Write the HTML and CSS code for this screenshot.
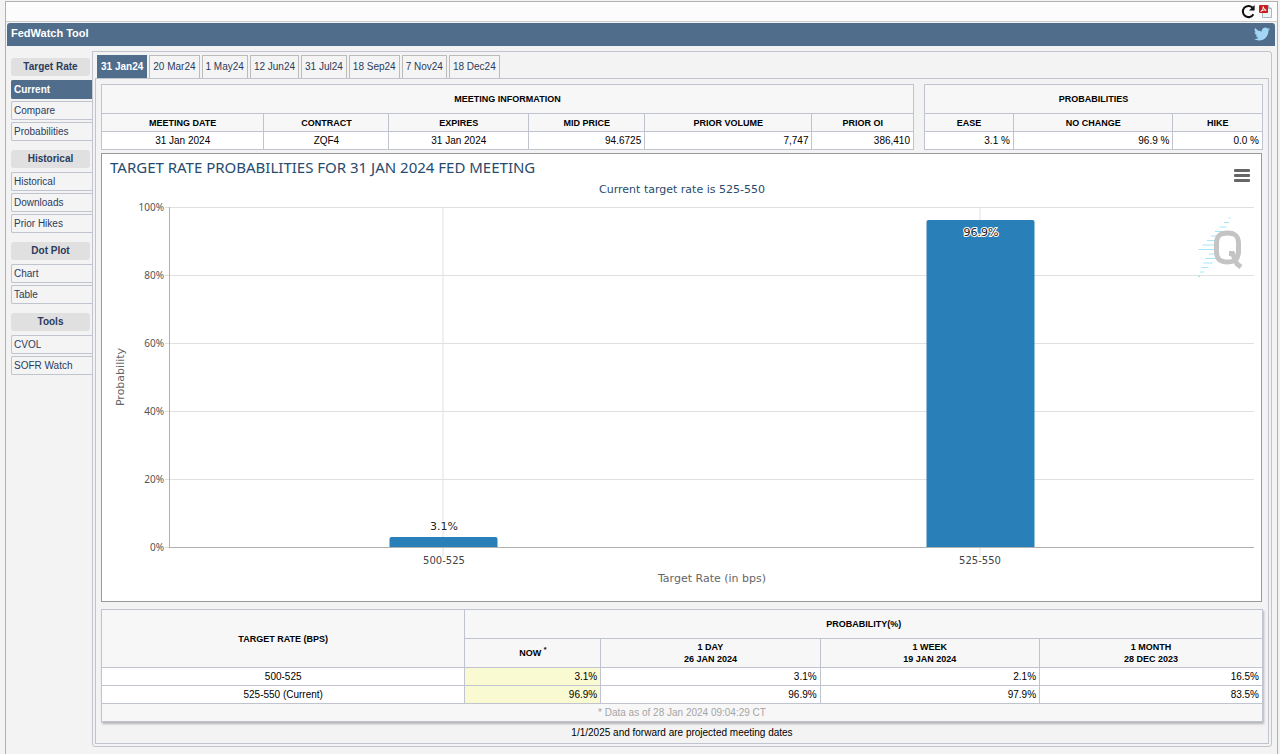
FILE: index.html
```html
<!DOCTYPE html>
<html lang="en">
<head>
<meta charset="utf-8">
<title>FedWatch Tool</title>
<link rel="stylesheet" href="styles.css">
</head>
<body>
<div class="frame">
  <div class="toolbar">
    <button class="icon-button" type="button" aria-label="Refresh">
      <svg width="15" height="15" viewBox="0 0 15 15"><path d="M12.400 10.200A5.600 5.600 0 1 1 11.400 3.500" fill="none" stroke="#111" stroke-width="2"/><path d="M13.600 1v5.600H8z" fill="#111"/></svg>
    </button>
    <button class="icon-button" type="button" aria-label="Export PDF">
      <svg width="15" height="15" viewBox="0 0 15 15"><path d="M4.500 1.500h6l3 3v9h-9z" fill="#eef3f6" stroke="#a9b8c2"/><path d="M10.500 1v3.500h3" fill="#cfdbe3" stroke="#a9b8c2"/><rect x="1" y="1" width="9" height="8" rx="1" fill="#c81e1e"/><path d="M2.800 7.300C4.600 6.300 5.400 4.500 5.200 2.600c.4 2 1.400 3.200 3 3.500-2-.2-3.500.2-5.400 1.200z" fill="none" stroke="#fff"/></svg>
    </button>
  </div>
  <header class="titlebar">
    <h1>FedWatch Tool</h1>
    <a href="#" aria-label="Twitter"><svg width="16" height="16" viewBox="0 0 24 24"><path fill="#a3d6f5" d="M23.950 4.570a10 10 0 0 1-2.820.77 4.960 4.960 0 0 0 2.160-2.720c-.95.550-2 .95-3.130 1.180a4.920 4.920 0 0 0-8.380 4.480C7.690 8.090 4.070 6.130 1.640 3.160a4.900 4.900 0 0 0 1.520 6.570 4.900 4.900 0 0 1-2.230-.61v.06a4.920 4.920 0 0 0 3.950 4.830 5 5 0 0 1-2.210.08 4.940 4.940 0 0 0 4.600 3.420A9.870 9.870 0 0 1 0 19.540a13.990 13.990 0 0 0 7.550 2.210c9.050 0 14-7.500 14-13.980l-.02-.63a9.940 9.940 0 0 0 2.420-2.570z"/></svg></a>
  </header>
  <div class="body">
    <nav class="sidebar">
      <section class="group"><h2>Target Rate</h2><a class="item active" href="#">Current</a><a class="item" href="#">Compare</a><a class="item" href="#">Probabilities</a></section>
      <section class="group"><h2>Historical</h2><a class="item" href="#">Historical</a><a class="item" href="#">Downloads</a><a class="item" href="#">Prior Hikes</a></section>
      <section class="group"><h2>Dot Plot</h2><a class="item" href="#">Chart</a><a class="item" href="#">Table</a></section>
      <section class="group"><h2>Tools</h2><a class="item" href="#">CVOL</a><a class="item" href="#">SOFR Watch</a></section>
    </nav>
    <main class="panel">
      <div class="tabs">
        <a class="tab active" href="#">31 Jan24</a><a class="tab" href="#">20 Mar24</a><a class="tab" href="#">1 May24</a><a class="tab" href="#">12 Jun24</a><a class="tab" href="#">31 Jul24</a><a class="tab" href="#">18 Sep24</a><a class="tab" href="#">7 Nov24</a><a class="tab" href="#">18 Dec24</a>
      </div>
      <div class="content">
        <div class="summary">
          <table class="data">
            <colgroup><col style="width:20%"><col style="width:15.400%"><col style="width:17.200%"><col style="width:14.300%"><col style="width:20.600%"><col style="width:12.500%"></colgroup>
            <thead>
              <tr class="tall"><th colspan="6">MEETING INFORMATION</th></tr>
              <tr><th>MEETING DATE</th><th>CONTRACT</th><th>EXPIRES</th><th>MID PRICE</th><th>PRIOR VOLUME</th><th>PRIOR OI</th></tr>
            </thead>
            <tbody><tr><td class="center">31 Jan 2024</td><td class="center">ZQF4</td><td class="center">31 Jan 2024</td><td>94.6725</td><td>7,747</td><td>386,410</td></tr></tbody>
          </table>
          <table class="data">
            <colgroup><col style="width:26.300%"><col style="width:47.200%"><col style="width:26.500%"></colgroup>
            <thead>
              <tr class="tall"><th colspan="3">PROBABILITIES</th></tr>
              <tr><th>EASE</th><th>NO CHANGE</th><th>HIKE</th></tr>
            </thead>
            <tbody><tr><td>3.1 %</td><td>96.9 %</td><td>0.0 %</td></tr></tbody>
          </table>
        </div>
        <div class="chart">
          <svg class="plot" viewBox="0 0 1159 447" role="img" aria-label="Target rate probabilities">
            <text class="chart-title" x="8" y="19">TARGET RATE PROBABILITIES FOR 31 JAN 2024 FED MEETING</text>
            <text class="label subtitle" x="580" y="39">Current target rate is 525-550</text>
            <g class="grid">
              <path d="M63 53.500H1152M63 121.500H1152M63 189.500H1152M63 257.500H1152M63 325.500H1152M63 393.500H67M341 53V403M878 53V403"/>
            </g>
            <g class="logo">
              <path class="bolt" d="M1126.500 64h2M1122 68.500h5M1117.500 73h7M1113 77.500h8M1109 82h6M1105 86.500h8M1100.500 91h12M1096.500 95.500h16M1107 100h6M1103.500 104.500h11M1101.500 109h9M1099.500 113.500h7M1098 118h4M1096 122.500h2"/>
              <path d="M1125.500 79c8 0 11 3 11 11v7c0 8-3 11-11 11s-11-3-11-11v-7c0-8 3-11 11-11z"/>
              <path d="M1127 99.500h3.500l4.500 10.500 4 3"/>
            </g>
            <path class="axis" d="M67.500 53V394M67 393.500H1152"/>
            <path class="bar" d="M287.500 393v-8a2 2 0 0 1 2-2h104a2 2 0 0 1 2 2v8z"/>
            <path class="bar" d="M824.500 393V68a2 2 0 0 1 2-2h104a2 2 0 0 1 2 2v325z"/>
            <g class="tick">
              <text x="62" y="57">100%</text><text x="62" y="125">80%</text><text x="62" y="193">60%</text><text x="62" y="261">40%</text><text x="62" y="329">20%</text><text x="62" y="397">0%</text>
            </g>
            <g class="label category"><text x="342" y="410">500-525</text><text x="878" y="410">525-550</text></g>
            <g class="label value"><text x="342" y="376">3.1%</text><text x="879" y="82">96.9%</text></g>
            <text class="label axis-title" x="610" y="428">Target Rate (in bps)</text>
            <text class="label axis-title" transform="translate(22 223) rotate(-90)">Probability</text>
          </svg>
          <button class="menu" type="button" aria-label="Chart menu"><span></span><span></span><span></span></button>
        </div>
        <table class="data results">
          <colgroup><col style="width:31.300%"><col style="width:11.700%"><col style="width:18.900%"><col style="width:18.900%"><col style="width:19.200%"></colgroup>
          <thead>
            <tr class="tall"><th rowspan="2">TARGET RATE (BPS)</th><th colspan="4">PROBABILITY(%)</th></tr>
            <tr class="tall"><th>NOW <sup>*</sup></th><th>1 DAY<br>26 JAN 2024</th><th>1 WEEK<br>19 JAN 2024</th><th>1 MONTH<br>28 DEC 2023</th></tr>
          </thead>
          <tbody>
            <tr><td class="center">500-525</td><td class="now">3.1%</td><td>3.1%</td><td>2.1%</td><td>16.5%</td></tr>
            <tr><td class="center">525-550 (Current)</td><td class="now">96.9%</td><td>96.9%</td><td>97.9%</td><td>83.5%</td></tr>
          </tbody>
          <tfoot><tr><td colspan="5">* Data as of 28 Jan 2024 09:04:29 CT</td></tr></tfoot>
        </table>
        <p class="note">1/1/2025 and forward are projected meeting dates</p>
      </div>
    </main>
  </div>
</div>
</body>
</html>
```
FILE: styles.css
```css
* { box-sizing: border-box; }
body {
  margin: 0;
  padding: 1px 2px 0 5px;
  background: #f3f3f3;
  color: #000;
  font: 10px/12px "Liberation Sans", Arial, sans-serif;
}
a { color: #2b3b5c; text-decoration: none; }
button { border: 0; padding: 0; background: none; }
svg { display: block; }
.frame {
  min-height: calc(100vh - 1px);
  border: 1px solid #b0b0b0;
  border-bottom: 0;
}
.toolbar {
  display: flex;
  justify-content: flex-end;
  align-items: center;
  gap: 2px;
  height: 20px;
  padding-right: 4px;
  background: #fcfcfc;
  border-bottom: 1px solid #ccc;
}
.titlebar {
  display: flex;
  justify-content: space-between;
  margin: 1px 2px 0 1px;
  height: 23px;
  padding: 3px 5px 0 4px;
  border-radius: 3px 3px 0 0;
  background: #506d8c;
}
.titlebar h1 { margin: 0; color: #fff; font-size: 11px; line-height: 14px; }
.body { display: flex; padding: 5px 5px 6px; }
.sidebar { flex: 0 0 81px; padding-top: 7px; }
.group { display: flex; flex-direction: column; gap: 2px; margin-bottom: 9px; }
.group h2 {
  margin: 0 2px 2px 0;
  border-radius: 3px;
  background: #e0e0e0;
  color: #2b3b5c;
  font-size: 10px;
  line-height: 18px;
  text-align: center;
}
.item {
  padding-left: 2px;
  border: 1px solid #c0c4ce;
  border-right: 0;
  border-radius: 2px 0 0 2px;
  background: #f4f4f4;
  line-height: 17px;
}
.item.active { border-color: #506d8c; background: #506d8c; color: #fff; font-weight: bold; }
.panel {
  flex: 1;
  min-width: 0;
  padding: 3px 2px 2px;
  border: 1px solid #c0c4ce;
  border-radius: 0 3px 3px 3px;
}
.tabs { display: flex; gap: 2px; padding-left: 2px; }
.tab {
  padding: 0 3px;
  border: 1px solid #bbb;
  border-bottom: 0;
  background: #f4f4f4;
  line-height: 22px;
}
.tab.active { border-color: #506d8c; background: #506d8c; color: #fff; font-weight: bold; }
.content { padding: 5px 5px 4px; border: 1px solid #c0c4ce; }
.summary { display: grid; grid-template-columns: 813fr 339fr; gap: 10px; }
.data { width: 100%; border-collapse: collapse; table-layout: fixed; }
.data th, .data td { border: 1px solid #c0c4ce; }
.data th { height: 18px; padding: 0; background: #f7f7f7; font-size: 9px; }
.data .tall th { height: 29px; }
.data td { height: 18px; padding: 0 3px; background: #fff; text-align: right; }
.data .center, .data tfoot td { text-align: center; }
.data .now { background: #f9f9d2; }
.data tfoot td { background: #f7f7f7; color: #a5a5a5; }
.data sup { font-size: 7px; line-height: 1px; }
.results { margin-top: 7px; box-shadow: 1px 2px 2px #b5b5b5; }
.note { margin: 5px 0 0; text-align: center; }
.chart { position: relative; margin: 3px 1px 0 0; border: 1px solid #999; background: #fff; }
.plot { width: 100%; height: auto; }
.chart-title { font: 15px "Noto Sans", sans-serif; fill: #274b6d; }
.label { font-family: "DejaVu Sans", sans-serif; text-anchor: middle; }
.subtitle { font-size: 11px; fill: #274b6d; }
.grid { fill: none; stroke: #e0e0e0; }
.axis { fill: none; stroke: #b0b0b0; }
.bar { fill: #2980b9; }
.tick { font: 10px "Noto Sans", sans-serif; text-anchor: end; fill: #555; }
.category { font-size: 10px; fill: #444; }
.value { font-size: 11px; fill: #222; stroke: #fff; stroke-width: 2px; paint-order: stroke; }
.axis-title { font-size: 11px; fill: #666; }
.logo { fill: none; stroke: #c4c4c4; stroke-width: 5px; }
.logo .bolt { stroke: #a5e5fa; stroke-width: 1px; }
.menu {
  position: absolute;
  top: 15px;
  right: 11px;
  display: grid;
  gap: 2px;
  width: 16px;
}
.menu span { height: 3px; border-radius: 1px; background: #666; }
```
